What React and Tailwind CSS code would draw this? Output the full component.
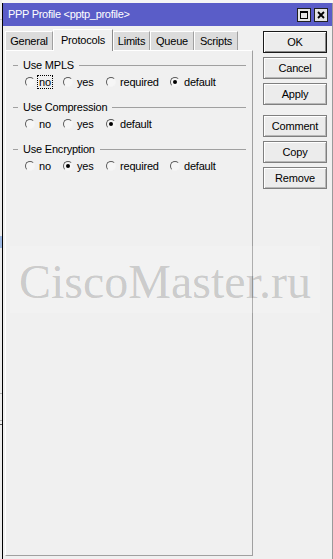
import React from "react";

function Radio({ label, checked, focus, w }) {
  return (
    <div className={`flex items-center h-[14px] ${w}`}>
      <span className="w-[10px] h-[10px] shrink-0 rounded-full border border-t-[#5a5a5a] border-l-[#5a5a5a] border-r-[#f4f4f4] border-b-[#f4f4f4] bg-[#f6f6f6] flex items-center justify-center">
        {checked && <span className="w-[4px] h-[4px] rounded-full bg-black" />}
      </span>
      <span
        className={`ml-[3px] px-[1px] leading-[12px] ${
          focus ? "outline outline-1 outline-dotted outline-black" : ""
        }`}
      >
        {label}
      </span>
    </div>
  );
}

function Group({ title, options, value, focusFirst, first }) {
  const widths = ["w-[38px]", "w-[43px]", "w-[64px]", "w-auto"];
  return (
    <div className={first ? "" : "mt-[11px]"}>
      <div className="flex items-center h-[14px]">
        <span className="w-[5px] h-px bg-[#a0a0a0]" />
        <span className="px-[5px] leading-[14px]">{title}</span>
        <span className="flex-1 h-px bg-[#a0a0a0]" />
      </div>
      <div className="flex mt-[3px] pl-[12px]">
        {options.map((o, i) => (
          <Radio
            key={o}
            label={o}
            checked={o === value}
            focus={focusFirst && i === 0}
            w={widths[i]}
          />
        ))}
      </div>
    </div>
  );
}

function Btn({ children, def, className = "" }) {
  return (
    <div
      className={`h-[22px] flex items-center justify-center bg-[#ececec] ${
        def
          ? "border border-[#1a1a1a] shadow-[inset_1px_1px_0_#ffffff,inset_-1px_-1px_0_#8a8a8a]"
          : "border border-[#7f7f7f] shadow-[inset_1px_1px_0_#ffffff,inset_-1px_-1px_0_#b8b8b8]"
      } ${className}`}
    >
      {children}
    </div>
  );
}

function Tab({ children, active, w }) {
  return active ? (
    <div
      className={`${w} h-[22px] flex items-center justify-center bg-[#f0f0f0] border-t border-l border-t-white border-l-white border-r border-r-[#8a8a8a] pb-[1px] -mb-px relative z-10`}
    >
      {children}
    </div>
  ) : (
    <div
      className={`${w} h-[19px] flex items-center justify-center bg-[#dcdcdc] border-t border-l border-t-white border-l-white border-r border-r-[#a0a0a0] pt-[1px]`}
    >
      {children}
    </div>
  );
}

export default function App() {
  return (
    <div className="w-[333px] h-[559px] relative overflow-hidden bg-[#f5f5f5] font-['Liberation_Sans',Arial,sans-serif] text-[11px] tracking-[-0.2px] text-black">
      <div className="flex h-full">
        {/* fragment of window behind */}
        <div className="w-[2px] flex flex-col bg-[#ececec]">
          <div className="h-[19px]" />
          <div className="h-px bg-[#c8c8c8]" />
          <div className="h-[216px]" />
          <div className="h-[12px] bg-[#9db8e2]" />
          <div className="h-[145px]" />
          <div className="h-px bg-[#b0b0b0]" />
          <div className="h-[26px]" />
          <div className="h-px bg-[#b0b0b0]" />
          <div className="h-[3px]" />
          <div className="h-px bg-[#555555]" />
        </div>

        {/* dialog window */}
        <div className="flex-1 flex flex-col mt-[3px] border-l border-l-black border-r border-r-[#9a9a9a] bg-[#f0f0f0]">
          {/* title bar */}
          <div className="h-[23px] bg-[#5a5dc8] flex items-center pl-[5px] pr-[4px]">
            <span className="text-white text-[11px] tracking-[-0.3px] leading-none">
              PPP Profile &lt;pptp_profile&gt;
            </span>
            <div className="ml-auto flex gap-[3px]">
              <div className="w-[14px] h-[14px] bg-[#e4e4e4] border border-[#202020] flex items-center justify-center">
                <span className="w-[8px] h-[8px] border border-black border-t-2" />
              </div>
              <div className="w-[14px] h-[14px] bg-[#e4e4e4] border border-[#202020] flex items-center justify-center">
                <svg width="8" height="8" viewBox="0 0 8 8">
                  <path d="M1 1 L7 7 M7 1 L1 7" stroke="#000" strokeWidth="1.8" />
                </svg>
              </div>
            </div>
          </div>

          {/* body */}
          <div className="flex-1 flex pl-[2px] pb-[3px]">
            <div className="w-[248px] flex flex-col pt-[2px]">
              <div className="flex items-end h-[22px]">
                <Tab w="w-[48px]">General</Tab>
                <Tab w="w-[60px]" active>
                  Protocols
                </Tab>
                <Tab w="w-[37px]">Limits</Tab>
                <Tab w="w-[44px]">Queue</Tab>
                <Tab w="w-[44px]">Scripts</Tab>
              </div>
              <div className="flex-1 border-l border-t border-l-white border-t-white border-r border-b border-r-[#a0a0a0] border-b-[#a0a0a0] pt-[7px] pl-[7px] pr-[6px]">
                <Group
                  first
                  title="Use MPLS"
                  options={["no", "yes", "required", "default"]}
                  value="default"
                  focusFirst
                />
                <Group
                  title="Use Compression"
                  options={["no", "yes", "default"]}
                  value="default"
                />
                <Group
                  title="Use Encryption"
                  options={["no", "yes", "required", "default"]}
                  value="yes"
                />
              </div>
            </div>

            <div className="ml-[10px] w-[64px] flex flex-col pt-[5px]">
              <Btn def>OK</Btn>
              <Btn className="mt-[4px]">Cancel</Btn>
              <Btn className="mt-[4px]">Apply</Btn>
              <Btn className="mt-[10px]">Comment</Btn>
              <Btn className="mt-[4px]">Copy</Btn>
              <Btn className="mt-[4px]">Remove</Btn>
            </div>
          </div>
        </div>
      </div>

      {/* watermark overlay */}
      <div className="absolute left-[10px] top-[246px] w-[310px] h-[67px] bg-[rgba(255,255,255,0.15)] flex items-center justify-center pointer-events-none">
        <span className="font-['Liberation_Serif','Times_New_Roman',serif] text-[48px] tracking-normal leading-none text-[rgba(0,0,0,0.18)] mt-[4px]">
          CiscoMaster.ru
        </span>
      </div>
    </div>
  );
}
